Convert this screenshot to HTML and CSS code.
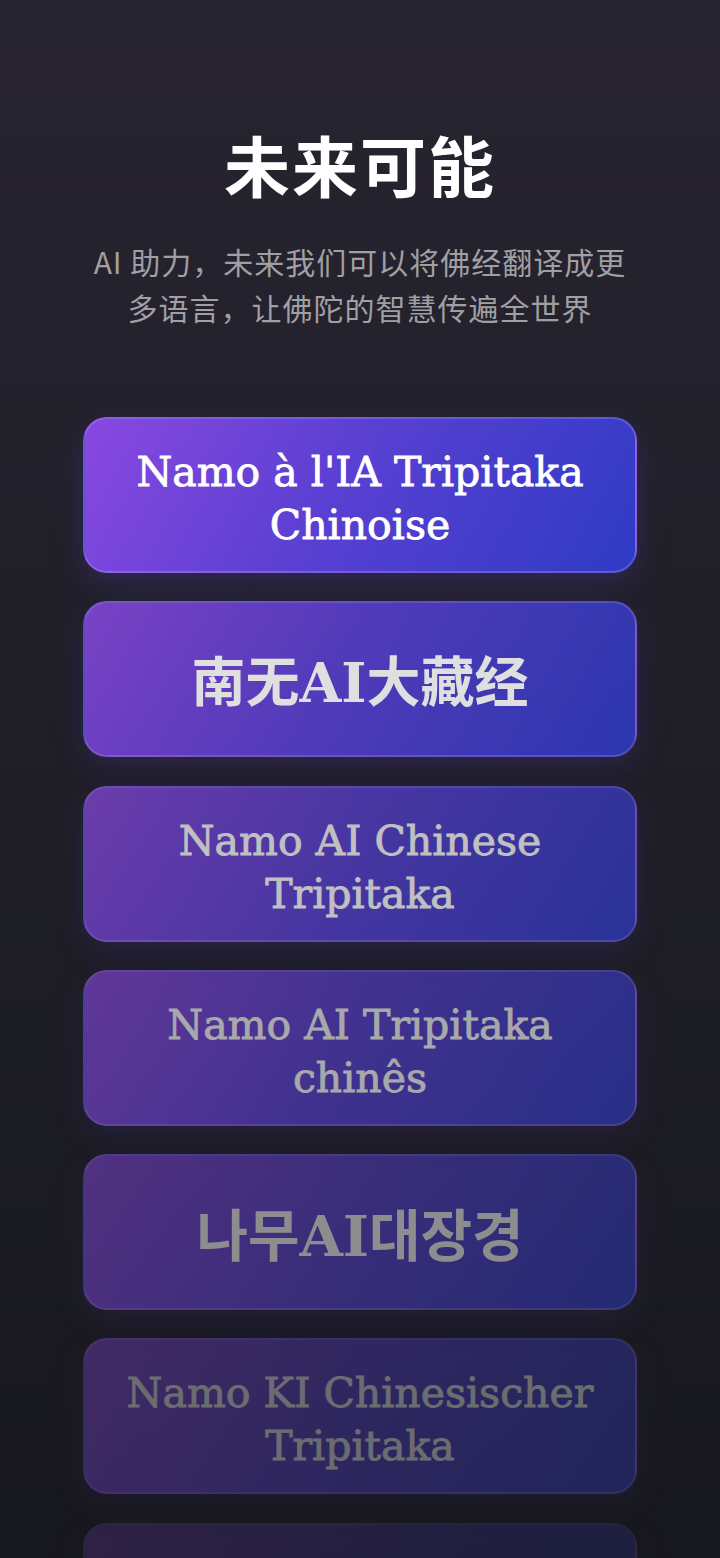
FILE: index.html
```html
<!DOCTYPE html>
<html lang="zh-CN">
<head>
<meta charset="utf-8">
<title>未来可能</title>
<link rel="stylesheet" href="styles.css">
</head>
<body>
<main class="page">
  <header class="hero">
    <h1 class="title">未来可能</h1>
    <p class="subtitle">AI 助力，未来我们可以将佛经翻译成更<br>多语言，让佛陀的智慧传遍全世界</p>
  </header>
  <section class="cards">
    <div class="card c1"><span class="card-text latin">Namo à l'IA Tripitaka<br>Chinoise</span></div>
    <div class="card c2"><span class="card-text cjk">南无AI大藏经</span></div>
    <div class="card c3"><span class="card-text latin">Namo AI Chinese<br>Tripitaka</span></div>
    <div class="card c4"><span class="card-text latin">Namo AI Tripitaka<br>chinês</span></div>
    <div class="card c5"><span class="card-text kr">나무AI대장경</span></div>
    <div class="card c6"><span class="card-text latin">Namo KI Chinesischer<br>Tripitaka</span></div>
    <div class="card c7"><span class="card-text jp">南無AI大蔵経</span></div>
  </section>
</main>
</body>
</html>
```
FILE: styles.css
```css
html {
  background: #17181d;
}
body {
  margin: 0;
  min-height: 100vh;
  background: linear-gradient(180deg, #27242f 0px, #201f28 700px, #17181d 1558px, #17181d 100%);
  color: #fff;
}
.page {
  padding: 122px 0 120px;
  display: flex;
  flex-direction: column;
  align-items: center;
}
.hero {
  text-align: center;
}
.title {
  margin: 0;
  font-family: "Noto Sans CJK SC", sans-serif;
  font-weight: 700;
  font-size: 66px;
  line-height: 82px;
  color: #ffffff;
  letter-spacing: 2px;
}
.subtitle {
  margin: 34px 0 0;
  font-family: "Noto Sans CJK SC", sans-serif;
  font-size: 30px;
  line-height: 46px;
  letter-spacing: 1px;
  color: #a09fa3;
}
.cards {
  margin-top: 87px;
  display: flex;
  flex-direction: column;
  gap: 28.3px;
}
.card {
  box-sizing: border-box;
  width: 554px;
  height: 156px;
  border-radius: 24px;
  border: 2px solid rgba(170, 140, 255, 0.35);
  background: linear-gradient(120deg, #8a48e0 0%, #5a40d2 45%, #2e3bc4 100%);
  box-shadow: 0 10px 30px rgba(100, 70, 220, 0.22);
  display: flex;
  align-items: center;
  justify-content: center;
  text-align: center;
  padding: 8px 24px 0;
}
.card-text {
  color: #ffffff;
}
.latin {
  font-family: "DejaVu Serif", serif;
  font-size: 41px;
  line-height: 53px;
  -webkit-text-stroke: 0.8px currentColor;
}
.cjk {
  font-family: "DejaVu Serif", "Noto Sans CJK SC", serif;
  font-weight: 700;
  font-size: 54px;
  line-height: 64px;
}
.kr {
  font-family: "DejaVu Serif", "Noto Sans CJK KR", serif;
  font-weight: 700;
  font-size: 56px;
  line-height: 64px;
}
.jp {
  font-family: "DejaVu Serif", "Noto Sans CJK JP", serif;
  font-weight: 700;
  font-size: 54px;
  line-height: 64px;
}
.c1 { opacity: 1; }
.c2 { opacity: 0.86; }
.c3 { opacity: 0.72; }
.c4 { opacity: 0.62; }
.c5 { opacity: 0.5; }
.c6 { opacity: 0.36; }
.c7 { opacity: 0.2; }
```
